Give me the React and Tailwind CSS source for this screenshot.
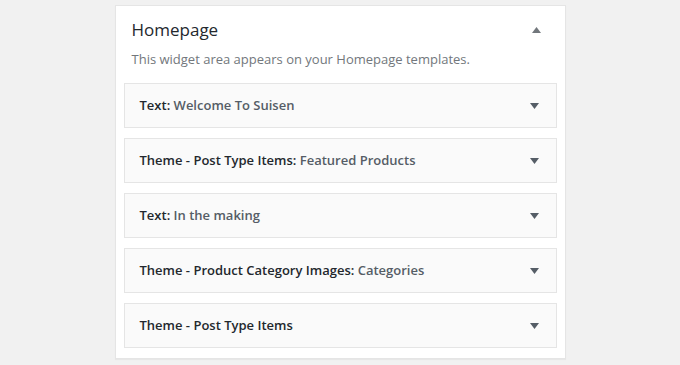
export default function App() {
  const widgets = [
    ["Text", "Welcome To Suisen"],
    ["Theme - Post Type Items", "Featured Products"],
    ["Text", "In the making"],
    ["Theme - Product Category Images", "Categories"],
    ["Theme - Post Type Items", null],
  ];
  return (
    <div className="min-h-[365px] w-[680px] bg-[#f1f1f1] flex justify-center pt-[5px]" style={{ fontFamily: '"Open Sans", sans-serif' }}>
      <div className="w-[451px] h-[354px] bg-white border border-[#e5e5e5] shadow-[0_1px_1px_rgba(0,0,0,0.04)] px-[8px]">
        <div className="flex items-center justify-between pt-[12px] pl-[8px] pr-[16px]">
          <h2 className="text-[17px] leading-[24px] text-[#23282d] font-medium">Homepage</h2>
          <svg width="9" height="6" viewBox="0 0 9 6"><path d="M4.5 0L9 6H0z" fill="#72777c" /></svg>
        </div>
        <p className="pl-[8px] mt-[8px] text-[13px] leading-[18px] text-[#72777c]">This widget area appears on your Homepage templates.</p>
        <div className="mt-[15px] flex flex-col gap-[10px]">
          {widgets.map(([t, s], i) => (
            <div key={i} className="h-[45px] bg-[#fafafa] border border-[#e5e5e5] flex items-center justify-between pl-[15px] pr-[17px]">
              <span className="text-[13px] font-semibold text-[#23282d]">
                {t}{s ? ":" : ""}{s ? <span className="text-[#555d66]"> {s}</span> : null}
              </span>
              <svg width="9" height="6" viewBox="0 0 9 6"><path d="M0 0H9L4.5 6z" fill="#555d66" /></svg>
            </div>
          ))}
        </div>
      </div>
    </div>
  );
}
